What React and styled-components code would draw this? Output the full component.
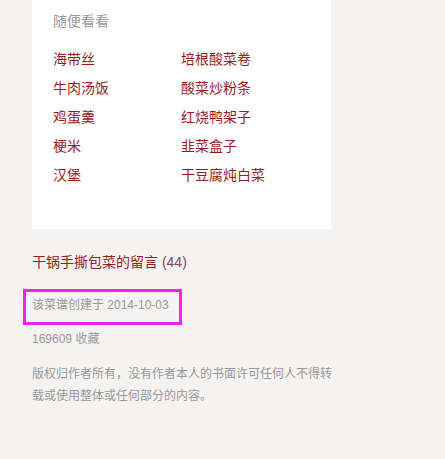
import React from "react";
import styled, { createGlobalStyle } from "styled-components";

const Global = createGlobalStyle`
  html, body { margin: 0; padding: 0; background: #f4f3f1; }
  body { font-family: "Liberation Sans", "Noto Sans CJK SC", sans-serif; }
`;

const Page = styled.div`
  width: 445px;
  min-height: 459px;
  box-sizing: border-box;
  padding-left: 32px;
`;

const Column = styled.div`
  width: 300px;
`;

const Card = styled.section`
  background: #fff;
  width: 299px;
  height: 229px;
  box-sizing: border-box;
  padding: 11px 21px 0;
`;

const CardTitle = styled.h3`
  margin: 0;
  font-size: 14px;
  line-height: 20px;
  font-weight: normal;
  color: #999;
`;

const Grid = styled.ul`
  list-style: none;
  margin: 14px 0 0;
  padding: 0;
  display: grid;
  grid-template-columns: 128px 128px;
  grid-auto-rows: 29px;
`;

const Item = styled.li`
  font-size: 14px;
  line-height: 29px;
  color: #9b1c1c;
`;

const CommentTitle = styled.h2`
  margin: 23px 0 0;
  font-size: 14px;
  line-height: 20px;
  font-weight: normal;
  color: #9b1c1c;
`;

const Count = styled.span`
  color: #8a4a55;
`;

const Meta = styled.p`
  margin: ${(p) => p.$mt}px 0 0;
  font-size: 12px;
  line-height: ${(p) => p.$lh || 20}px;
  color: #999;
`;

const Highlighted = styled(Meta)`
  position: relative;
  &::after {
    content: "";
    position: absolute;
    left: -9px;
    top: -6px;
    width: 159px;
    height: 36px;
    box-sizing: border-box;
    border: 3px solid #f51ff0;
  }
`;

const items = [
  "海带丝", "培根酸菜卷",
  "牛肉汤饭", "酸菜炒粉条",
  "鸡蛋羹", "红烧鸭架子",
  "梗米", "韭菜盒子",
  "汉堡", "干豆腐炖白菜",
];

export default function App() {
  return (
    <>
      <Global />
      <Page>
        <Column>
          <Card>
            <CardTitle>随便看看</CardTitle>
            <Grid>
              {items.map((t) => (
                <Item key={t}>{t}</Item>
              ))}
            </Grid>
          </Card>
          <CommentTitle>
            干锅手撕包菜的留言 <Count>(44)</Count>
          </CommentTitle>
          <Highlighted $mt={23}>该菜谱创建于 2014-10-03</Highlighted>
          <Meta $mt={14}>169609 收藏</Meta>
          <Meta $mt={14} $lh={22}>
            版权归作者所有，没有作者本人的书面许可任何人不得转载或使用整体或任何部分的内容。
          </Meta>
        </Column>
      </Page>
    </>
  );
}
